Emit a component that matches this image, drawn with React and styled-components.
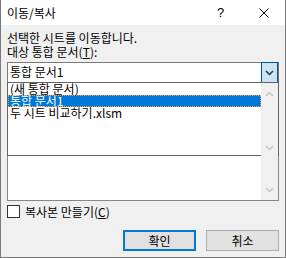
import styled, { createGlobalStyle } from "styled-components";

const GlobalStyle = createGlobalStyle`
  body {
    margin: 0;
    background: #ffffff;
    font-family: "Noto Sans CJK KR", "Noto Sans", sans-serif;
    font-size: 12px;
    color: #000000;
  }
`;

const Window = styled.div`
  width: 286px;
  height: 258px;
  box-sizing: border-box;
  border: 1px solid #7a7a7a;
  border-top: 0;
  background: #f0f0f0;
  display: flex;
  flex-direction: column;
`;

const TitleBar = styled.div`
  height: 25px;
  flex: none;
  background: #ffffff;
  display: flex;
  align-items: center;
  padding-left: 6px;
  .title {
    line-height: 14px;
    margin-top: 1px;
  }
`;

const TitleButton = styled.div`
  width: 43px;
  height: 25px;
  display: flex;
  align-items: center;
  justify-content: center;
  font-family: "Liberation Sans", sans-serif;
  font-size: 13px;
  margin-left: ${(p) => (p.first ? "auto" : "0")};
`;

const Body = styled.div`
  padding: 6px 6px 0;
  display: flex;
  flex-direction: column;
`;

const Line = styled.div`
  line-height: 14px;
  height: 14px;
  white-space: nowrap;
`;

const Underline = styled.span`
  text-decoration: underline;
  text-underline-offset: 1px;
`;

const ComboWrap = styled.div`
  position: relative;
  margin-top: 3px;
`;

const Combo = styled.div`
  height: 21px;
  box-sizing: border-box;
  border: 1px solid #7a7a7a;
  background: #ffffff;
  display: flex;
  .value {
    flex: 1;
    padding-left: 2px;
    line-height: 18px;
  }
`;

const DropButton = styled.div`
  width: 17px;
  height: 21px;
  margin: -1px 0;
  box-sizing: border-box;
  border: 1px solid #005499;
  background: #cce4f7;
  display: flex;
  align-items: center;
  justify-content: center;
`;

const DropList = styled.div`
  position: absolute;
  top: 20px;
  left: 0;
  right: 0;
  height: 74px;
  box-sizing: border-box;
  border: 1px solid #646464;
  border-bottom: 0;
  background: #ffffff;
  display: flex;
  z-index: 2;
`;

const Items = styled.div`
  flex: 1;
  border-bottom: 1px solid #646464;
  padding-top: 0;
`;

const Item = styled.div`
  height: 12px;
  line-height: 12px;
  padding-left: 2px;
  box-sizing: border-box;
  white-space: nowrap;
  background: ${(p) => (p.selected ? "#0078d7" : "transparent")};
  color: ${(p) => (p.selected ? "#ffffff" : "#000000")};
  outline: ${(p) => (p.selected ? "1px dotted #f4a13a" : "none")};
  outline-offset: -1px;
`;

const ScrollBar = styled.div`
  width: 17px;
  background: #f0f0f0;
  display: flex;
  flex-direction: column;
  justify-content: space-between;
  align-items: center;
  padding: ${(p) => p.pad};
  box-sizing: border-box;
`;

const ListBox = styled.div`
  height: 118px;
  box-sizing: border-box;
  border: 1px solid #828790;
  background: #ffffff;
  display: flex;
  justify-content: flex-end;
`;

const CheckRow = styled.div`
  margin-top: 4px;
  display: flex;
  align-items: center;
  height: 13px;
  .label {
    margin-left: 5px;
    line-height: 13px;
  }
`;

const CheckBox = styled.div`
  width: 13px;
  height: 13px;
  box-sizing: border-box;
  border: 1px solid #333333;
  background: #ffffff;
`;

const ButtonRow = styled.div`
  margin-top: 12px;
  display: flex;
  justify-content: flex-end;
  gap: 10px;
`;

const Button = styled.div`
  width: 73px;
  height: 21px;
  box-sizing: border-box;
  background: #e1e1e1;
  border: ${(p) => (p.primary ? "2px solid #0078d7" : "1px solid #adadad")};
  display: flex;
  align-items: center;
  justify-content: center;
  line-height: 14px;
`;

const Chevron = ({ up, color }) => (
  <svg width="9" height="6" viewBox="0 0 9 6">
    <polyline
      points={up ? "1,5 4.5,1.5 8,5" : "1,1 4.5,4.5 8,1"}
      fill="none"
      stroke={color}
      strokeWidth="1.5"
    />
  </svg>
);

export default function App() {
  return (
    <>
      <GlobalStyle />
      <Window>
        <TitleBar>
          <span className="title">이동/복사</span>
          <TitleButton first>?</TitleButton>
          <TitleButton>
            <svg width="10" height="10" viewBox="0 0 10 10">
              <path d="M0.5 0.5 L9.5 9.5 M9.5 0.5 L0.5 9.5" stroke="#000" strokeWidth="1" />
            </svg>
          </TitleButton>
        </TitleBar>
        <Body>
          <Line>선택한 시트를 이동합니다.</Line>
          <Line>
            대상 통합 문서(<Underline>T</Underline>):
          </Line>
          <ComboWrap>
            <Combo>
              <div className="value">통합 문서1</div>
              <DropButton>
                <Chevron color="#333" />
              </DropButton>
            </Combo>
            <DropList>
              <Items>
                <Item>(새 통합 문서)</Item>
                <Item selected>통합 문서1</Item>
                <Item>두 시트 비교하기.xlsm</Item>
              </Items>
              <ScrollBar pad="8px 0 5px">
                <Chevron up color="#c5c5c5" />
                <Chevron color="#c5c5c5" />
              </ScrollBar>
            </DropList>
            <ListBox>
              <ScrollBar pad="0 0 7px" style={{ justifyContent: "flex-end" }}>
                <Chevron color="#c5c5c5" />
              </ScrollBar>
            </ListBox>
          </ComboWrap>
          <CheckRow>
            <CheckBox />
            <span className="label">
              복사본 만들기(<Underline>C</Underline>)
            </span>
          </CheckRow>
          <ButtonRow>
            <Button primary>확인</Button>
            <Button>취소</Button>
          </ButtonRow>
        </Body>
      </Window>
    </>
  );
}
